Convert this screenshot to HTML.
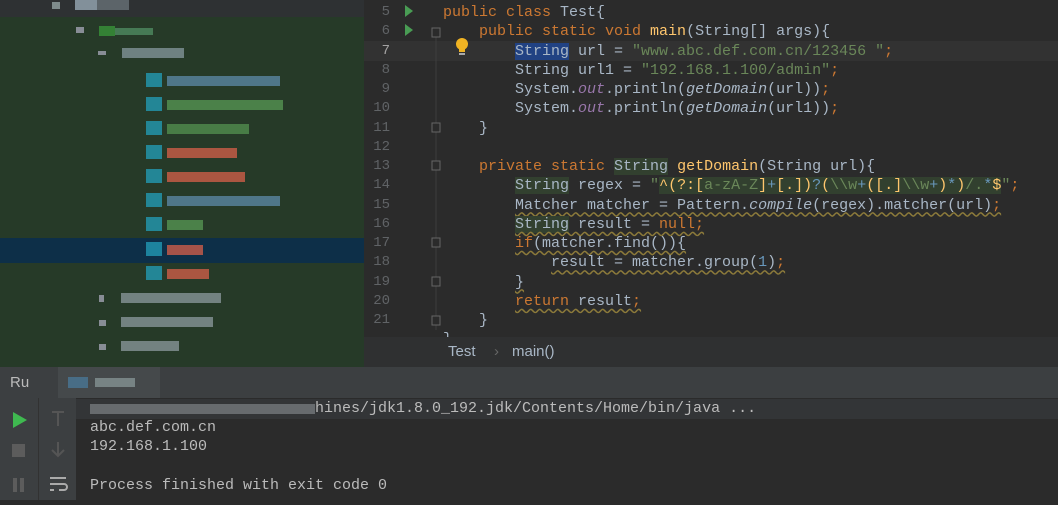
<!DOCTYPE html>
<html><head><meta charset="utf-8"><style>
*{margin:0;padding:0;box-sizing:border-box}
body{width:1058px;height:500px;overflow:hidden;background:#2b2b2b;font-family:"Liberation Mono",monospace;position:relative}
#left{position:absolute;left:0;top:0;width:364px;height:367px;background:#263a28}
#left .top{position:absolute;left:0;top:0;width:364px;height:17px;background:#2e3133}
#left .sel{position:absolute;left:0;top:238px;width:364px;height:25px;background:#0d2f48}
.b{position:absolute;height:10px;opacity:.75}
#ed{position:absolute;left:364px;top:0;width:694px;height:337px;background:#2b2b2b}
.cur{position:absolute;left:0;top:41px;width:694px;height:20px;background:#323232}
.ln{position:absolute;left:364px;top:3px;width:26px;text-align:right;color:#606366;font-size:14px;line-height:19.25px}
.code{position:absolute;left:443px;top:3px;color:#a9b7c6;font-size:15px;line-height:19.25px;white-space:pre}
.k{color:#cc7832}.s{color:#6a8759}.f{color:#ffc66d}.p{color:#9876aa;font-style:italic}.i{font-style:italic}.n{color:#6897bb}
.w{text-decoration:underline wavy #8c7a3a;text-underline-offset:3px}
#bc{position:absolute;left:364px;top:337px;width:694px;height:30px;background:#2f3031;color:#a9b7c6;font-family:"Liberation Sans",sans-serif;font-size:15px}
#tabs{position:absolute;left:0;top:367px;width:1058px;height:31px;background:#3c3f41;color:#bbb;font-family:"Liberation Sans",sans-serif;font-size:15px}
#tb1{position:absolute;left:0;top:398px;width:38px;height:102px;background:#3c3f41}
#tb2{position:absolute;left:38px;top:398px;width:38px;height:102px;background:#3c3f41;border-left:1px solid #323232}
.con{position:absolute;left:90px;color:#bbbbbb;font-size:15px;white-space:pre}
</style></head><body>
<div id="left">
<div class="top"></div><div class="sel"></div>
<div class="b" style="left:52px;top:2px;width:8px;height:7px;background:#9aa"></div>
<div class="b" style="left:75px;top:0;width:22px;background:#9fb0bd"></div>
<div class="b" style="left:97px;top:0;width:32px;background:#8a97a0;opacity:.5"></div>
<div class="b" style="left:76px;top:27px;width:8px;height:6px;background:#aab"></div>
<div class="b" style="left:99px;top:26px;width:16px;background:#3a9a3a"></div>
<div class="b" style="left:115px;top:28px;width:38px;height:7px;background:#7d9;opacity:.4"></div>
<div class="b" style="left:98px;top:51px;width:8px;height:4px;background:#aab"></div>
<div class="b" style="left:122px;top:48px;width:62px;background:#9fb0bd;opacity:.6"></div>
<div class="b" style="left:146px;top:73px;width:16px;height:14px;background:#23a0bb"></div><div class="b" style="left:167px;top:76px;width:113px;background:#6a9ec9;opacity:.6"></div>
<div class="b" style="left:146px;top:97px;width:16px;height:14px;background:#23a0bb"></div><div class="b" style="left:167px;top:100px;width:116px;background:#5fa85a;opacity:.65"></div>
<div class="b" style="left:146px;top:121px;width:16px;height:14px;background:#23a0bb"></div><div class="b" style="left:167px;top:124px;width:82px;background:#5fa85a;opacity:.6"></div>
<div class="b" style="left:146px;top:145px;width:16px;height:14px;background:#23a0bb"></div><div class="b" style="left:167px;top:148px;width:70px;background:#d8604a"></div>
<div class="b" style="left:146px;top:169px;width:16px;height:14px;background:#23a0bb"></div><div class="b" style="left:167px;top:172px;width:78px;background:#d8604a"></div>
<div class="b" style="left:146px;top:193px;width:16px;height:14px;background:#23a0bb"></div><div class="b" style="left:167px;top:196px;width:113px;background:#6a9ec9;opacity:.6"></div>
<div class="b" style="left:146px;top:217px;width:16px;height:14px;background:#23a0bb"></div><div class="b" style="left:167px;top:220px;width:36px;background:#5fa85a;opacity:.65"></div>
<div class="b" style="left:146px;top:242px;width:16px;height:14px;background:#23a0bb"></div><div class="b" style="left:167px;top:245px;width:36px;background:#d8604a"></div>
<div class="b" style="left:146px;top:266px;width:16px;height:14px;background:#23a0bb"></div><div class="b" style="left:167px;top:269px;width:42px;background:#d8604a"></div>
<div class="b" style="left:99px;top:295px;width:5px;height:7px;background:#aab"></div><div class="b" style="left:121px;top:293px;width:100px;background:#a6b3bd;opacity:.6"></div>
<div class="b" style="left:99px;top:320px;width:7px;height:6px;background:#aab"></div><div class="b" style="left:121px;top:317px;width:92px;background:#a6b3bd;opacity:.6"></div>
<div class="b" style="left:99px;top:344px;width:7px;height:6px;background:#aab"></div><div class="b" style="left:121px;top:341px;width:58px;background:#a6b3bd;opacity:.6"></div>
</div>
<div id="ed"><div class="cur"></div></div>
<div class="ln">5<br>6<br><span style="color:#a4a3a3">7</span><br>8<br>9<br>10<br>11<br>12<br>13<br>14<br>15<br>16<br>17<br>18<br>19<br>20<br>21</div>
<svg style="position:absolute;left:364px;top:0" width="90" height="337">
<path d="M41 5l8 6-8 6z" fill="#499c54"/><path d="M41 24l8 6-8 6z" fill="#499c54"/>
<line x1="72" y1="28" x2="72" y2="330" stroke="#3e3e3e"/>
<g fill="#2b2b2b" stroke="#666"><rect x="68" y="28" width="8" height="9"/><rect x="68" y="123" width="8" height="9"/><rect x="68" y="161" width="8" height="9"/><rect x="68" y="238" width="8" height="9"/><rect x="68" y="277" width="8" height="9"/><rect x="68" y="316" width="8" height="9"/></g>
</svg>
<svg style="position:absolute;left:455px;top:38px" width="14" height="18"><circle cx="7" cy="6" r="6" fill="#f0b323"/><rect x="4" y="11" width="6" height="3" fill="#f0b323"/><rect x="4" y="15" width="6" height="2" fill="#aaa"/></svg>
<div class="code"><span class="k">public class </span>Test{
    <span class="k">public static void </span><span class="f">main</span>(String[] args){
        <span style="background:#214283">String</span> url = <span class="s">"www.abc.def.com.cn/123456 "</span><span class="k">;</span>
        String url1 = <span class="s">"192.168.1.100/admin"</span><span class="k">;</span>
        System.<span class="p">out</span>.println(<span class="i">getDomain</span>(url))<span class="k">;</span>
        System.<span class="p">out</span>.println(<span class="i">getDomain</span>(url1))<span class="k">;</span>
    }

    <span class="k">private static </span><span style="background:#32402f">String</span> <span class="f">getDomain</span>(String url){
        <span style="background:#32402f">String</span> regex = <span class="s">"<span style="background:#32402f"><span class="f">^(?:[</span>a-zA-Z<span class="f">]</span><span class="n">+</span><span class="f">[.])</span><span class="n">?</span><span class="f">(</span>\\w<span class="n">+</span><span class="f">([.]</span>\\w<span class="n">+</span><span class="f">)</span><span class="n">*</span><span class="f">)</span>/.<span class="n">*</span><span class="f">$</span></span>"</span><span class="k">;</span>
        <span class="w">Matcher matcher = Pattern.<span class="i">compile</span>(regex).matcher(url)<span class="k">;</span></span>
        <span class="w"><span style="background:#32402f">String</span> result = <span class="k">null;</span></span>
        <span class="w"><span class="k">if</span>(matcher.find()){</span>
            <span class="w">result = matcher.group(<span class="n">1</span>)<span class="k">;</span></span>
        <span class="w">}</span>
        <span class="w"><span class="k">return</span> result<span class="k">;</span></span>
    }
}</div>
<div id="bc"><span style="position:absolute;left:84px;top:6px">Test</span><span style="position:absolute;left:130px;top:6px;color:#666">›</span><span style="position:absolute;left:148px;top:6px">main()</span></div>
<div id="tabs"><span style="position:absolute;left:10px;top:7px">Ru</span><div style="position:absolute;left:58px;top:0;width:102px;height:31px;background:#45494b"></div><div class="b" style="left:68px;top:10px;width:20px;height:11px;background:#4a7a9a"></div><div class="b" style="left:95px;top:11px;width:40px;height:9px;background:#9aa;opacity:.6"></div></div>
<div id="tb1"><svg width="38" height="102"><path d="M13 14l14 8-14 8z" fill="#3fb950"/><rect x="12" y="46" width="13" height="13" fill="#5c5c5c"/><rect x="13" y="80" width="4" height="14" fill="#5c5c5c"/><rect x="20" y="80" width="4" height="14" fill="#5c5c5c"/></svg></div>
<div id="tb2"><svg width="38" height="102"><path d="M13 14h12M19 14v14" stroke="#555" stroke-width="2"/><path d="M19 44v14M13 52l6 6 6-6" stroke="#555" stroke-width="2" fill="none"/><path d="M11 80h16M11 86h14a3 3 0 010 6h-5M11 92h4" stroke="#aaa" stroke-width="2" fill="none"/></svg></div>
<div style="position:absolute;left:76px;top:399px;width:982px;height:20px;background:#333537"></div>
<div class="b" style="left:90px;top:404px;width:225px;height:10px;background:#8a8f93;opacity:.6"></div>
<div class="con" style="top:400px;left:315px">hines/jdk1.8.0_192.jdk/Contents/Home/bin/java ...</div>
<div class="con" style="top:419px">abc.def.com.cn</div>
<div class="con" style="top:438px">192.168.1.100</div>
<div class="con" style="top:477px">Process finished with exit code 0</div>
</body></html>
